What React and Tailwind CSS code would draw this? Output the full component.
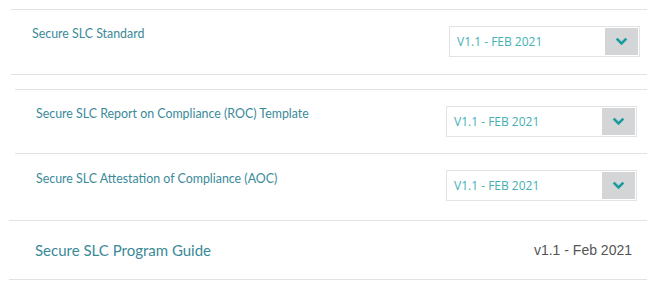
import React from "react";

function Chevron() {
  return (
    <svg width="11" height="8" viewBox="0 0 11 8" className="block">
      <path d="M1.5 1.5 L5.5 5.5 L9.5 1.5" fill="none" stroke="#1a9c9e" strokeWidth="2.6" strokeLinecap="square" />
    </svg>
  );
}

function Select() {
  return (
    <div className="flex h-[31px] w-[191px] items-stretch border border-[#e3e3e3] bg-white">
      <div className="flex flex-1 items-center pl-[7px] text-[12px] text-[#45b0b3] [font-family:'Open_Sans',sans-serif]">
        V1.1 - FEB 2021
      </div>
      <div className="m-[1px] flex w-[33px] items-center justify-center bg-[#d4d5d6]">
        <Chevron />
      </div>
    </div>
  );
}

export default function App() {
  const label = "text-[12.4px] text-[#3a8a99] [font-family:Lato,sans-serif]";
  return (
    <div className="h-[292px] w-[656px] bg-white pt-[9px]">
      <div className="ml-[11px] flex h-[66px] w-[636px] justify-between border-y border-[#e2e2e2]">
        <div className={`pl-[21px] pt-[15px] ${label}`}>Secure SLC Standard</div>
        <div className="pr-[7px] pt-[16px]">
          <Select />
        </div>
      </div>
      <div className="ml-[15px] mt-[14px] w-[632px]">
        <div className="flex h-[64px] justify-between border-t border-[#e2e2e2]">
          <div className={`pl-[21px] pt-[15px] ${label}`}>Secure SLC Report on Compliance (ROC) Template</div>
          <div className="pr-[10px] pt-[16px]">
            <Select />
          </div>
        </div>
        <div className="flex h-[67px] justify-between border-t border-[#e2e2e2]">
          <div className={`pl-[21px] pt-[16px] ${label}`}>Secure SLC Attestation of Compliance (AOC)</div>
          <div className="pr-[10px] pt-[16px]">
            <Select />
          </div>
        </div>
      </div>
      <div className="ml-[9px] flex h-[60px] w-[638px] items-center justify-between border-y border-[#e2e2e2]">
        <div className="pl-[26px] text-[15px] text-[#3a8a99] [font-family:Lato,sans-serif]">Secure SLC Program Guide</div>
        <div className="pr-[15px] text-[14px] text-[#555] [font-family:'Liberation_Sans',sans-serif]">v1.1 - Feb 2021</div>
      </div>
    </div>
  );
}
